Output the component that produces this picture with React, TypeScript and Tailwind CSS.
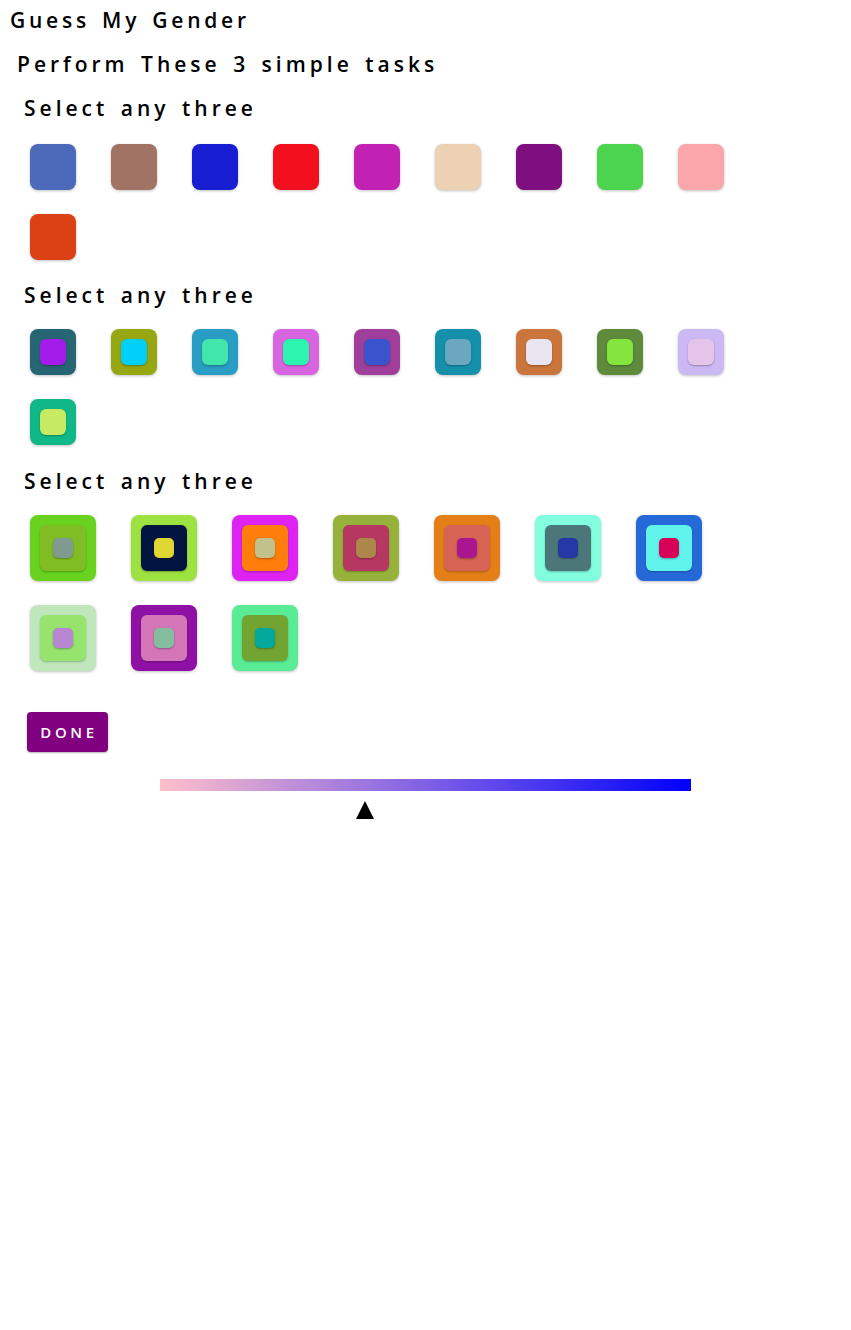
const plain = ['#4d69b9', '#a07365', '#171dd1', '#f20f1e', '#c222b3', '#ecd1b2', '#7f0f7e', '#4cd44e', '#faa6aa', '#db4115'];

const double = [
  ['#266574', '#a41cea'],
  ['#97a711', '#00cff8'],
  ['#299dc3', '#41e6ab'],
  ['#d964e0', '#2cf5ad'],
  ['#a03e9c', '#3954cc'],
  ['#1490ab', '#6ba7bf'],
  ['#cb753c', '#e8e5f1'],
  ['#5e8a3c', '#84e53e'],
  ['#cbb9f3', '#e5c4ea'],
  ['#11b887', '#c6eb63'],
];

const triple = [
  ['#68d21f', '#80bd24', '#819a90'],
  ['#9de241', '#021440', '#dfd634'],
  ['#de22f1', '#fe7d0b', '#c0c18b'],
  ['#97b23a', '#b73763', '#ad864c'],
  ['#e37f16', '#d66353', '#a9168f'],
  ['#81fee0', '#4c7779', '#2638a6'],
  ['#2569d8', '#5ff3ec', '#d70257'],
  ['#c0e7bb', '#96e36d', '#b986d3'],
  ['#8e10a4', '#d576b9', '#83bd9e'],
  ['#5aec94', '#72a432', '#02a89c'],
];

function Heading({ children }: { children: string }) {
  return <h2 className="ml-6 text-[21px] font-semibold leading-[30px] tracking-[4px] [word-spacing:3px] text-black">{children}</h2>;
}

export default function App() {
  return (
    <div className="min-h-[1330px] bg-white pt-px" style={{ fontFamily: '"Open Sans", sans-serif' }}>
      <h1 className="pl-[10px] pt-[4px] text-[21px] font-semibold leading-[30px] tracking-[3.75px] [word-spacing:3px] text-black">Guess My Gender</h1>
      <p className="mt-[14px] pl-[17px] text-[21px] font-semibold leading-[30px] tracking-[4px] [word-spacing:3px] text-black">Perform These 3 simple tasks</p>

      <div className="mt-[14px]">
        <Heading>Select any three</Heading>
        <div className="ml-[30px] mt-[21px] flex w-[760px] flex-wrap gap-x-[35px] gap-y-[24px]">
          {plain.map((c) => (
            <button key={c} className="h-[46px] w-[46px] rounded-[8px] shadow-[0_1px_3px_rgba(0,0,0,0.25)]" style={{ backgroundColor: c }} />
          ))}
        </div>
      </div>

      <div className="mt-[20px]">
        <Heading>Select any three</Heading>
        <div className="ml-[30px] mt-[19px] flex w-[760px] flex-wrap gap-x-[35px] gap-y-[24px]">
          {double.map(([o, i]) => (
            <button key={o} className="flex h-[46px] w-[46px] items-center justify-center rounded-[8px] shadow-[0_1px_3px_rgba(0,0,0,0.25)]" style={{ backgroundColor: o }}>
              <span className="h-[26px] w-[26px] rounded-[6px] shadow-[0_1px_2px_rgba(0,0,0,0.3)]" style={{ backgroundColor: i }} />
            </button>
          ))}
        </div>
      </div>

      <div className="mt-[21px]">
        <Heading>Select any three</Heading>
        <div className="ml-[30px] mt-[19px] flex w-[760px] flex-wrap gap-x-[35px] gap-y-[24px]">
          {triple.map(([o, m, i]) => (
            <button key={o} className="flex h-[66px] w-[66px] items-center justify-center rounded-[8px] shadow-[0_1px_3px_rgba(0,0,0,0.25)]" style={{ backgroundColor: o }}>
              <span className="flex h-[46px] w-[46px] items-center justify-center rounded-[6px] shadow-[0_1px_2px_rgba(0,0,0,0.25)]" style={{ backgroundColor: m }}>
                <span className="h-[20px] w-[20px] rounded-[5px] shadow-[0_1px_2px_rgba(0,0,0,0.3)]" style={{ backgroundColor: i }} />
              </span>
            </button>
          ))}
        </div>
      </div>

      <button className="ml-[27px] mt-[41px] h-[40px] w-[81px] rounded-[4px] bg-[#800080] pl-[3px] text-[15px] font-semibold tracking-[3.6px] text-white shadow-[0_1px_2px_rgba(0,0,0,0.3)]">
        DONE
      </button>

      <div className="ml-[160px] mt-[27px] h-[12px] w-[531px] bg-[linear-gradient(to_right,#ffc0cb,#0000ff)]" />
      <div className="ml-[356px] mt-[10px] h-0 w-0 border-x-[9px] border-b-[18px] border-x-transparent border-b-black" />
    </div>
  );
}
